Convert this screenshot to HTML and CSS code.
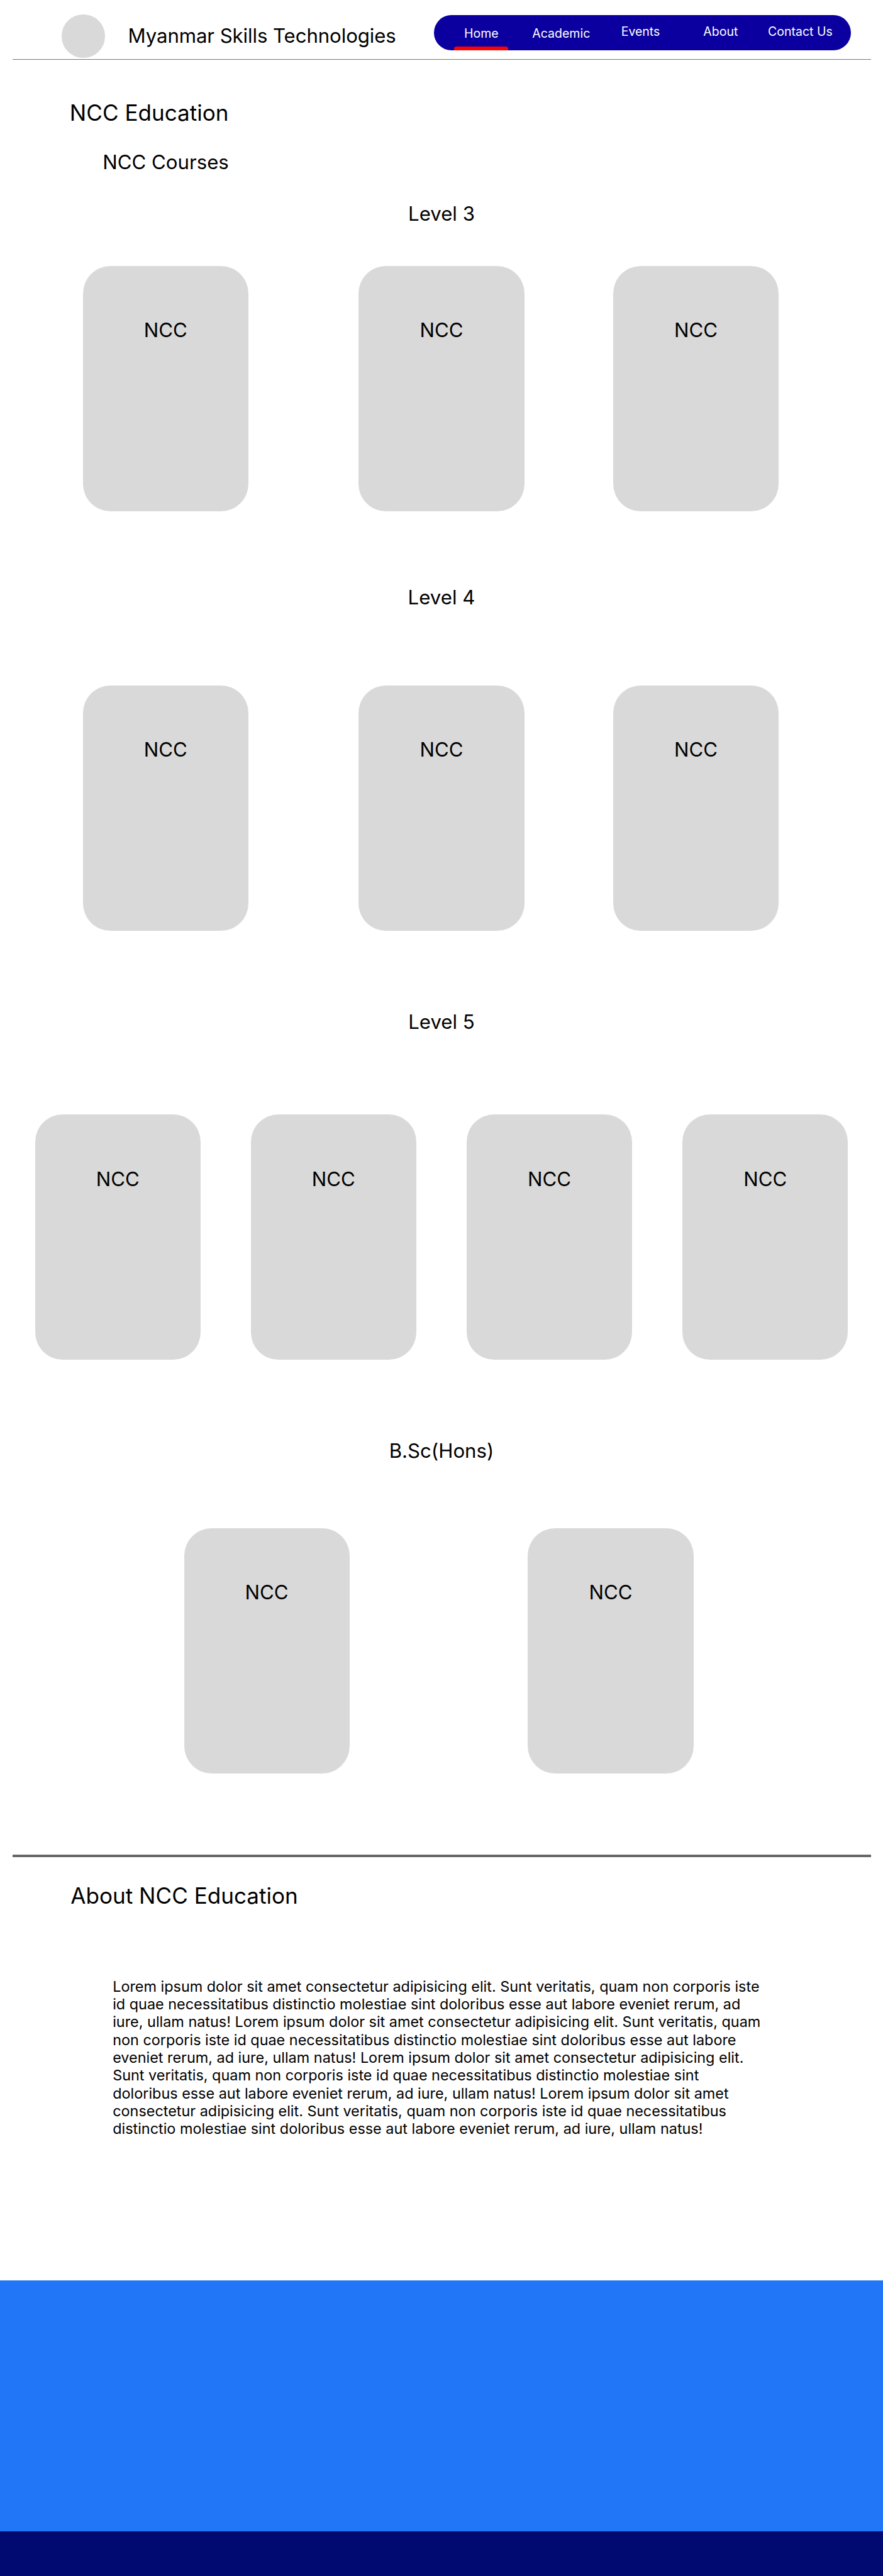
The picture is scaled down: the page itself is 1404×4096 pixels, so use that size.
FILE: index.html
```html
<!DOCTYPE html>
<html lang="en">
<head>
<meta charset="utf-8">
<title>Myanmar Skills Technologies</title>
<link rel="stylesheet" href="styles.css">
</head>
<body>
<header class="site-header">
  <div class="logo"></div>
  <div class="brand">Myanmar Skills Technologies</div>
  <nav class="nav">
    <a class="nav-link home">Home</a>
    <a class="nav-link academic">Academic</a>
    <a class="nav-link events">Events</a>
    <a class="nav-link about-us">About</a>
    <a class="nav-link contact">Contact Us</a>
  </nav>
</header>
<main>
  <h1 class="page-title">NCC Education</h1>
  <h2 class="page-subtitle">NCC Courses</h2>
  <section class="level level-3">
    <h3 class="level-title">Level 3</h3>
    <div class="cards cards-three">
      <article class="card">NCC</article>
      <article class="card">NCC</article>
      <article class="card">NCC</article>
    </div>
  </section>
  <section class="level level-4">
    <h3 class="level-title">Level 4</h3>
    <div class="cards cards-three">
      <article class="card">NCC</article>
      <article class="card">NCC</article>
      <article class="card">NCC</article>
    </div>
  </section>
  <section class="level level-5">
    <h3 class="level-title">Level 5</h3>
    <div class="cards cards-four">
      <article class="card">NCC</article>
      <article class="card">NCC</article>
      <article class="card">NCC</article>
      <article class="card">NCC</article>
    </div>
  </section>
  <section class="level level-bsc">
    <h3 class="level-title">B.Sc(Hons)</h3>
    <div class="cards cards-two">
      <article class="card">NCC</article>
      <article class="card">NCC</article>
    </div>
  </section>
  <section class="about">
    <h2 class="about-title">About NCC Education</h2>
    <p class="about-text">Lorem ipsum dolor sit amet consectetur adipisicing elit. Sunt veritatis, quam non corporis iste id quae necessitatibus distinctio molestiae sint doloribus esse aut labore eveniet rerum, ad iure, ullam natus! Lorem ipsum dolor sit amet consectetur adipisicing elit. Sunt veritatis, quam non corporis iste id quae necessitatibus distinctio molestiae sint doloribus esse aut labore eveniet rerum, ad iure, ullam natus! Lorem ipsum dolor sit amet consectetur adipisicing elit. Sunt veritatis, quam non corporis iste id quae necessitatibus distinctio molestiae sint doloribus esse aut labore eveniet rerum, ad iure, ullam natus! Lorem ipsum dolor sit amet consectetur adipisicing elit. Sunt veritatis, quam non corporis iste id quae necessitatibus distinctio molestiae sint doloribus esse aut labore eveniet rerum, ad iure, ullam natus!</p>
  </section>
</main>
<footer class="footer">
  <div class="footer-main"></div>
  <div class="footer-bar"></div>
</footer>
</body>
</html>
```

FILE: styles.css
```css
/* 1rem is ten design units */
html { font-size: 9.75px; }
*, *::before, *::after { box-sizing: border-box; }
body {
  display: flex;
  flex-direction: column;
  margin: 0;
  width: 144rem;
  min-height: 100vh;
  background: #fff;
  color: #000;
  font-family: Inter, "Liberation Sans", sans-serif;
  line-height: 1.21;
}
h1, h2, h3, p { margin: 0; font-weight: 400; }

.site-header {
  display: flex;
  align-items: flex-start;
  height: 9.7rem;
  margin: 0 2rem;
  padding: 2.4rem 3.2rem 0 8.1rem;
  border-bottom: 1px solid #777;
}
.logo { width: 7rem; height: 7rem; border-radius: 50%; background: #d9d9d9; }
.brand { margin: 1.65rem 0 0 3.77rem; font-size: 3.2rem; letter-spacing: -0.01rem; white-space: nowrap; }
.nav {
  display: flex;
  width: 68rem;
  height: 5.7rem;
  margin: 0.1rem 0 0 auto;
  border-radius: 2.85rem;
  background: #0b009f;
  color: #fff;
  font-size: 2rem;
}
.nav-link { padding-top: 1.5rem; white-space: nowrap; }
.home {
  display: flex;
  flex-direction: column;
  justify-content: space-between;
  width: 8.8rem;
  margin-left: 3.3rem;
  padding-top: 1.8rem;
  text-align: center;
}
.home::after { content: ""; height: 0.6rem; border-radius: 0.4rem 0.4rem 0 0; background: #f00; }
.academic { width: 14.4rem; padding-left: 3.9rem; padding-top: 1.8rem; }
.events { width: 13.4rem; padding-left: 4rem; }
.about-us { width: 10.4rem; padding-left: 4rem; }
.contact { padding-left: 4.14rem; }

.page-title { margin: 6.5rem 0 0 11.37rem; height: 4.4rem; font-size: 3.6rem; }
.page-subtitle { margin: 4rem 0 0 16.74rem; height: 3.9rem; font-size: 3.2rem; }

.level-title { height: 3.9rem; font-size: 3.2rem; text-align: center; }
.level-3 { padding-top: 4.5rem; }
.level-4 { padding-top: 12.2rem; }
.level-5 { padding-top: 13rem; }
.level-bsc { padding-top: 13rem; }
.cards { display: grid; }
.cards-three { grid-template-columns: 45rem 41.5rem 27rem; padding-left: 13.5rem; }
.cards-four { grid-template-columns: repeat(4, 27rem); gap: 8.2rem; padding-left: 5.7rem; }
.cards-two { grid-template-columns: repeat(2, 27rem); gap: 29.1rem; padding-left: 30rem; }
.level-3 .cards { margin-top: 6.5rem; }
.level-4 .cards { margin-top: 12.3rem; }
.level-5 .cards { margin-top: 13.1rem; }
.level-bsc .cards { margin-top: 10.5rem; }
.card {
  width: 27rem;
  height: 40rem;
  padding-top: 8.65rem;
  border-radius: 4.5rem;
  background: #d9d9d9;
  font-size: 3.2rem;
  text-align: center;
}

.about {
  height: 69.4rem;
  margin: 13.3rem 2rem 0;
  padding: 4.1rem 0 0 9.52rem;
  border-top: 0.5rem solid #666;
}
.about-title { height: 4.4rem; font-size: 3.6rem; }
.about-text { width: 106rem; margin: 11.15rem 0 0 6.86rem; font-size: 2.4rem; line-height: 2.9rem; }

.footer { display: flex; flex-direction: column; flex: 1; }
.footer-main { height: 40.9rem; background: #2176f7; }
.footer-bar { flex: 1 0 7.2rem; background: #000a70; }
```
